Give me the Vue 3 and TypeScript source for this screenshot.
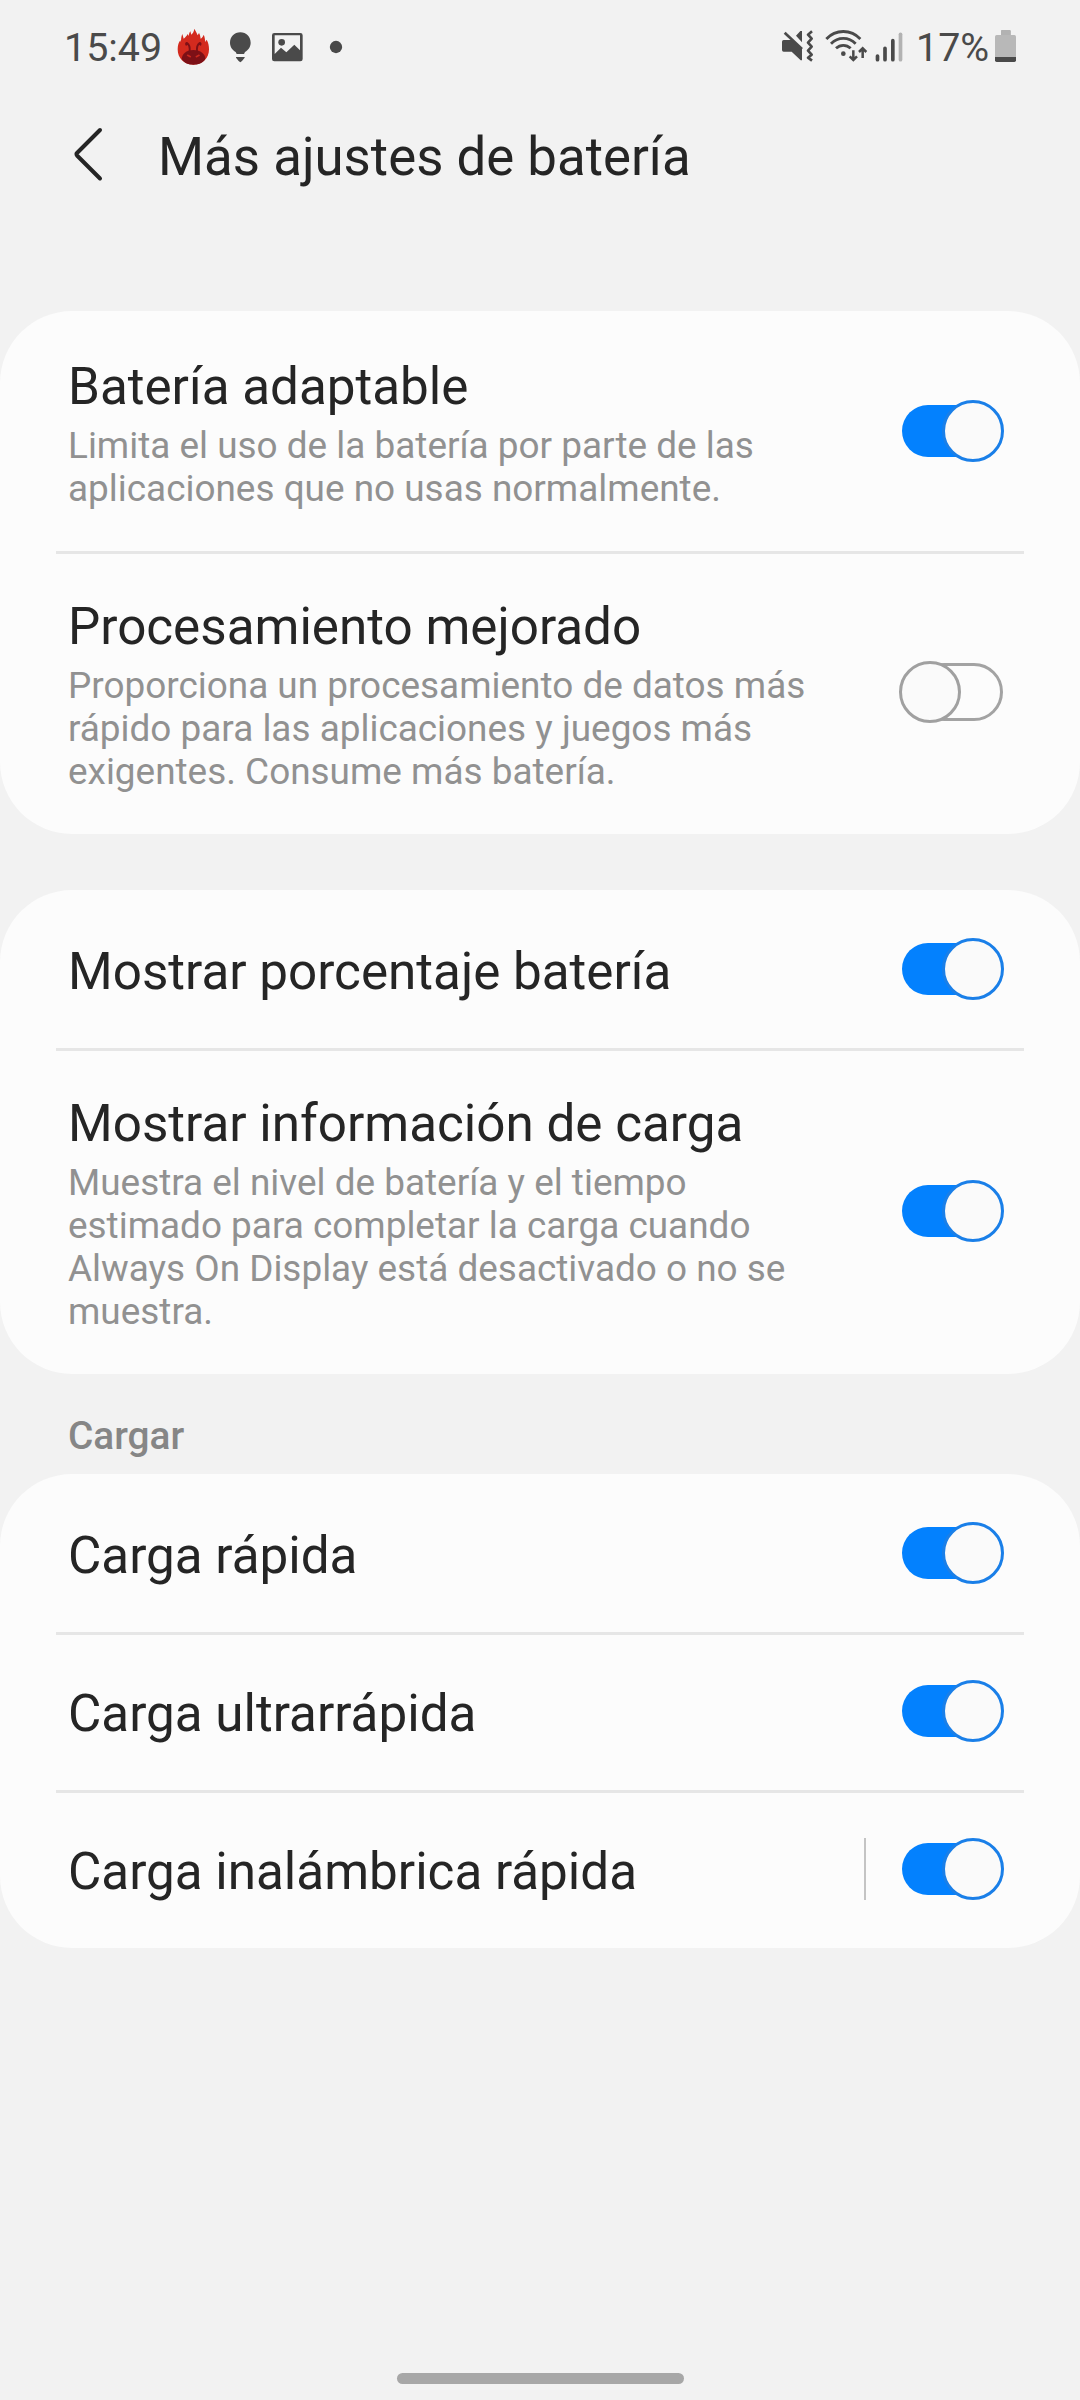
<script setup lang="ts">
import { ref } from 'vue'

interface Setting {
  title: string
  summary?: string[]
  on: boolean
  split?: boolean
}

interface Group {
  label?: string
  items: Setting[]
}

const groups = ref<Group[]>([
  {
    items: [
      {
        title: 'Batería adaptable',
        summary: ['Limita el uso de la batería por parte de las', 'aplicaciones que no usas normalmente.'],
        on: true,
      },
      {
        title: 'Procesamiento mejorado',
        summary: [
          'Proporciona un procesamiento de datos más',
          'rápido para las aplicaciones y juegos más',
          'exigentes. Consume más batería.',
        ],
        on: false,
      },
    ],
  },
  {
    items: [
      { title: 'Mostrar porcentaje batería', on: true },
      {
        title: 'Mostrar información de carga',
        summary: [
          'Muestra el nivel de batería y el tiempo',
          'estimado para completar la carga cuando',
          'Always On Display está desactivado o no se',
          'muestra.',
        ],
        on: true,
      },
    ],
  },
  {
    label: 'Cargar',
    items: [
      { title: 'Carga rápida', on: true },
      { title: 'Carga ultrarrápida', on: true },
      { title: 'Carga inalámbrica rápida', on: true, split: true },
    ],
  },
])
</script>

<template>
  <div class="screen">
    <div class="status">
      <span class="clock">15:49</span>
      <svg class="flame" width="33" height="38" viewBox="411 54 99 114">
        <path fill="#d32a1e" d="M460 164C432 164 413 145 413 118C413 106 416 98 421 91L423 97C423 87 424 79 427 72L431 86C436 82 440 78 443 72L446 78C447 71 449 67 451 64L454 74C459 69 462 64 463 56C466 63 470 67 473 76L477 69C480 74 481 79 482 86C487 83 489 79 491 74C494 80 495 87 496 96L500 89C505 98 507 107 507 118C507 145 488 164 460 164Z" />
        <path fill="#7d1016" d="M460 120C482 120 496 132 496 147C488 160 474 164 460 164C446 164 433 160 425 147C426 132 438 120 460 120Z" />
        <path fill="none" stroke="#7d1016" stroke-width="6" stroke-linecap="round" stroke-linejoin="round" d="M449 124C450 113 447 103 441 99C438 99 438 101 439 104M471 124C470 113 473 103 479 99C482 99 482 101 481 104" />
        <path fill="none" stroke="#c9281f" stroke-width="5" stroke-linecap="round" d="M443 136L451 140M477 136L469 140" />
      </svg>
      <svg class="bulb" width="23" height="38" viewBox="567 54 69 114">
        <path fill="#4a4a4a" d="M601 67C583 67 570 81 570 98C570 110 577 120 587 126L590 132H612L615 126C625 120 632 110 632 98C632 81 619 67 601 67ZM588 141H614V143L606 153L601 157L596 153L588 143Z" />
      </svg>
      <svg class="photo" width="33" height="38" viewBox="693 54 99 114">
        <path fill="#4a4a4a" fill-rule="evenodd" d="M703 69H781Q788 69 788 76V147Q788 154 781 154H703Q696 154 696 147V76Q696 69 703 69ZM704 76V132L723 113L739 127L763 104L780 121V76Z" />
        <circle cx="725" cy="97" r="10" fill="#4a4a4a" />
      </svg>
      <svg class="more" width="14" height="38" viewBox="867 54 42 114">
        <circle cx="888" cy="111" r="18.5" fill="#4a4a4a" />
      </svg>
      <div class="spacer"></div>
      <svg width="33" height="38" viewBox="63 54 99 114">
        <path fill="#4a4a4a" d="M71 90H84L96 90L126 118V151H122L95 125H71Q66 125 66 120V95Q66 90 71 90ZM108 77L121 63H126V97Z" />
        <path fill="none" stroke="#4a4a4a" stroke-width="8" d="M74 68L126 117" />
        <path fill="none" stroke="#4a4a4a" stroke-width="8" stroke-linejoin="round" d="M156 64L144 74L155 86L144 98L155 110L144 122L155 134L144 143L156 152" />
      </svg>
      <svg class="wifi" width="44" height="38" viewBox="192 54 132 114">
        <g fill="none" stroke="#4a4a4a" stroke-width="8.5">
          <path d="M199 87C227 57 273 57 301 87" />
          <path d="M213 101C234 80 266 80 287 101" />
          <path d="M228 115C241 103 259 103 272 115" />
          <path d="M280 121V150M269 139L280 150L291 139" stroke-width="7.5" />
          <path d="M308 144V115M297 126L308 115L319 126" stroke-width="7.5" />
        </g>
        <circle cx="250" cy="131" r="7" fill="#4a4a4a" />
      </svg>
      <svg class="signal" width="30" height="38" viewBox="342 54 90 114">
        <g fill="none" stroke="#4a4a4a" stroke-width="11" stroke-linecap="round">
          <path d="M352.500 138V149M375 115V149M398.500 92V149" />
          <path d="M421.500 73V149" stroke="#b2b2b2" />
        </g>
      </svg>
      <span class="percent">17%</span>
      <svg width="23" height="38" viewBox="702 54 69 114">
        <path fill="#b8b8b8" d="M723 64Q723 60 727 60H748Q752 60 752 64V75H763Q768 75 768 80V141H705V80Q705 75 710 75H723Z" />
        <path fill="#b2b2b2" d="M723 64Q723 60 727 60H748Q752 60 752 64V75H723Z" />
        <path fill="#4a4a4a" d="M705 141H768V151Q768 156 763 156H710Q705 156 705 151Z" />
      </svg>
    </div>

    <header class="header">
      <svg class="back" width="34" height="60" viewBox="0 0 34 60">
        <path fill="none" stroke="#252525" stroke-width="4" stroke-linecap="round" stroke-linejoin="round" d="M29 6L6 29Q5 30 6 31.500L29 54.500" />
      </svg>
      <h1>Más ajustes de batería</h1>
    </header>

    <main>
      <section v-for="(group, g) in groups" :key="g" class="group" :class="{ labelled: group.label }">
        <h2 v-if="group.label">{{ group.label }}</h2>
        <div class="card">
          <div
            v-for="item in group.items"
            :key="item.title"
            class="row"
            :class="{ single: !item.summary }"
          >
            <div class="text">
              <div class="title">{{ item.title }}</div>
              <div v-if="item.summary" class="summary">
                <div v-for="line in item.summary" :key="line">{{ line }}</div>
              </div>
            </div>
            <div v-if="item.split" class="split"></div>
            <button
              class="switch"
              :class="{ on: item.on }"
              role="switch"
              :aria-checked="item.on"
              :aria-label="item.title"
              @click="item.on = !item.on"
            >
              <span class="thumb"></span>
            </button>
          </div>
        </div>
      </section>
    </main>

    <footer class="nav"><div class="handle"></div></footer>
  </div>
</template>

<style>
body {
  margin: 0;
  background: #f2f2f2;
}
</style>

<style scoped>
.screen {
  box-sizing: border-box;
  width: 1080px;
  height: 2400px;
  display: flex;
  flex-direction: column;
  background: #f2f2f2;
  font-family: Roboto, 'Noto Sans', sans-serif;
  color: #252525;
  overflow: hidden;
}
.status {
  box-sizing: border-box;
  height: 96px;
  padding: 28px 63px 0 64px;
  display: flex;
  align-items: flex-start;
  font-size: 39.4px;
  line-height: 40px;
  color: #4a4a4a;
}
.status svg {
  display: block;
  flex: none;
}
.clock {
  width: 113px;
}
.bulb {
  margin-left: 19px;
}
.photo {
  margin-left: 19px;
}
.more {
  margin-left: 25px;
}
.spacer {
  flex: 1;
}
.wifi {
  margin-left: 10px;
}
.signal {
  margin-left: 6px;
}
.percent {
  width: 78px;
  margin-left: 12px;
  white-space: nowrap;
}
.header {
  box-sizing: border-box;
  height: 215px;
  padding: 28px 0 0 71px;
  display: flex;
  align-items: flex-start;
}
.back {
  display: block;
  flex: none;
}
h1 {
  margin: 0 0 0 53px;
  font-size: 52.8px;
  line-height: 66px;
  font-weight: 400;
  white-space: nowrap;
}
.group + .group {
  margin-top: 56px;
}
.group + .labelled {
  margin-top: 0;
}
.group h2 {
  margin: 0;
  box-sizing: border-box;
  height: 100px;
  padding: 40px 0 0 68px;
  font-size: 38.8px;
  line-height: 44px;
  font-weight: 500;
  color: #868686;
}
.card {
  border-radius: 72px;
  background: #fcfcfc;
}
.row {
  display: flex;
  align-items: center;
  padding-right: 76px;
}
.row + .row {
  background: linear-gradient(#e6e6e6, #e6e6e6) 56px 0 / 968px 3px no-repeat;
}
.text {
  flex: 1;
  padding: 46px 0 41px 68px;
}
.single .text {
  padding: 52px 0 46px 68px;
}
.title {
  font-size: 51.2px;
  line-height: 60px;
  white-space: nowrap;
}
.summary {
  margin-top: 7px;
  font-size: 36.92px;
  line-height: 43px;
  color: #919191;
  white-space: nowrap;
}
.split {
  width: 2px;
  height: 62px;
  margin: 0 33px 1px 0;
  background: #c4c4c4;
}
.switch {
  flex: none;
  display: grid;
  align-items: center;
  width: 105px;
  height: 62px;
  margin-bottom: 1px;
  padding: 0;
  border: 0;
  background: none;
}
.switch::before,
.thumb {
  grid-area: 1 / 1;
  box-sizing: border-box;
  content: '';
}
.switch::before {
  width: 88px;
  height: 58px;
  margin-left: 16px;
  border: 3px solid #a3a3a3;
  border-radius: 29px;
}
.switch.on::before {
  width: 96px;
  height: 52px;
  margin-left: 3px;
  border: 0;
  border-radius: 26px;
  background: #0381fe;
}
.thumb {
  width: 62px;
  height: 62px;
  border: 3px solid #a0a0a0;
  border-radius: 50%;
  background: #fafafa;
}
.on .thumb {
  justify-self: end;
  border-color: #1a7fe8;
}
.nav {
  margin-top: auto;
  display: flex;
  justify-content: center;
  padding-bottom: 16px;
}
.handle {
  width: 287px;
  height: 11px;
  border-radius: 6px;
  background: #a7a7a7;
}
</style>
